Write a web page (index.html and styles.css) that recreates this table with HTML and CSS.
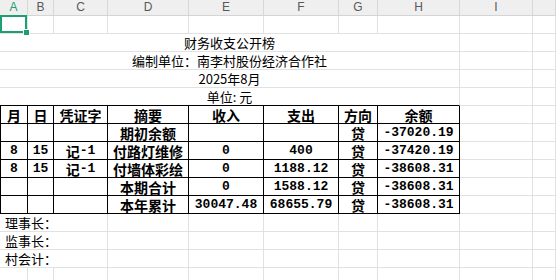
FILE: index.html
```html
<!DOCTYPE html>
<html lang="zh-CN">
<head>
<meta charset="utf-8">
<title>财务收支公开榜</title>
<link rel="stylesheet" href="styles.css">
</head>
<body>
<div class="sheet">
  <div class="cols">
    <div class="ch on">A</div><div class="ch">B</div><div class="ch">C</div><div class="ch">D</div><div class="ch">E</div><div class="ch">F</div><div class="ch">G</div><div class="ch">H</div><div class="ch">I</div><div class="ch"></div>
  </div>
  <div class="grid">
    <!-- row 1 -->
    <div class="c"></div><div class="c"></div><div class="c"></div><div class="c"></div><div class="c"></div><div class="c"></div><div class="c"></div><div class="c"></div><div class="c"></div><div class="c"></div>
    <!-- rows 2-5 -->
    <div class="c m8 title">财务收支公开榜</div><div class="c"></div><div class="c"></div>
    <div class="c m8 title">编制单位：南李村股份经济合作社</div><div class="c"></div><div class="c"></div>
    <div class="c m8 title">2025年8月</div><div class="c"></div><div class="c"></div>
    <div class="c m8 title topb">单位: 元</div><div class="c"></div><div class="c"></div>
    <!-- table header -->
    <div class="c t first cn">月</div><div class="c t cn">日</div><div class="c t cn">凭证字</div><div class="c t cn">摘要</div><div class="c t cn">收入</div><div class="c t cn">支出</div><div class="c t cn">方向</div><div class="c t cn">余额</div><div class="c"></div><div class="c"></div>
    <!-- row: 期初余额 -->
    <div class="c t first"></div><div class="c t"></div><div class="c t"></div><div class="c t cn">期初余额</div><div class="c t"></div><div class="c t"></div><div class="c t cn">贷</div><div class="c t num">-37020.19</div><div class="c"></div><div class="c"></div>
    <!-- row: 付路灯维修 -->
    <div class="c t first num">8</div><div class="c t num">15</div><div class="c t num"><span class="cn">记</span>-1</div><div class="c t cn">付路灯维修</div><div class="c t num">0</div><div class="c t num">400</div><div class="c t cn">贷</div><div class="c t num">-37420.19</div><div class="c"></div><div class="c"></div>
    <!-- row: 付墙体彩绘 -->
    <div class="c t first num">8</div><div class="c t num">15</div><div class="c t num"><span class="cn">记</span>-1</div><div class="c t cn">付墙体彩绘</div><div class="c t num">0</div><div class="c t num">1188.12</div><div class="c t cn">贷</div><div class="c t num">-38608.31</div><div class="c"></div><div class="c"></div>
    <!-- row: 本期合计 -->
    <div class="c t first"></div><div class="c t"></div><div class="c t"></div><div class="c t cn">本期合计</div><div class="c t num">0</div><div class="c t num">1588.12</div><div class="c t cn">贷</div><div class="c t num">-38608.31</div><div class="c"></div><div class="c"></div>
    <!-- row: 本年累计 -->
    <div class="c t first"></div><div class="c t"></div><div class="c t"></div><div class="c t cn">本年累计</div><div class="c t num">30047.48</div><div class="c t num">68655.79</div><div class="c t cn">贷</div><div class="c t num">-38608.31</div><div class="c"></div><div class="c"></div>
    <!-- footer rows -->
    <div class="c m3 title">理事长：</div><div class="c"></div><div class="c"></div><div class="c"></div><div class="c"></div><div class="c"></div><div class="c"></div><div class="c"></div>
    <div class="c m3 title">监事长：</div><div class="c"></div><div class="c"></div><div class="c"></div><div class="c"></div><div class="c"></div><div class="c"></div><div class="c"></div>
    <div class="c m3 title">村会计：</div><div class="c"></div><div class="c"></div><div class="c"></div><div class="c"></div><div class="c"></div><div class="c"></div><div class="c"></div>
    <!-- last partial row -->
    <div class="c"></div><div class="c"></div><div class="c"></div><div class="c"></div><div class="c"></div><div class="c"></div><div class="c"></div><div class="c"></div><div class="c"></div><div class="c"></div>
  </div>
  <div class="selection"><div class="handle"></div></div>
</div>
</body>
</html>
```

FILE: styles.css
```css
html, body {
  margin: 0;
  padding: 0;
  background: #ffffff;
}

.sheet {
  position: relative;
  width: 556px;
  height: 280px;
  overflow: hidden;
}

.cols,
.grid {
  display: grid;
  grid-template-columns: 28px 26px 54px 81px 75px 75px 39px 82px 73px 1fr;
}

.cols {
  height: 16px;
  background: #efefef;
}

.ch {
  box-sizing: border-box;
  border-right: 1px solid #d8d8d8;
  border-bottom: 1px solid #d4d4d4;
  font-family: "Liberation Sans", Arial, sans-serif;
  font-size: 12px;
  line-height: 15px;
  color: #595959;
  text-align: center;
}

.ch.on {
  color: #1ba073;
}

.grid {
  grid-auto-rows: 18px;
}

.c {
  box-sizing: border-box;
  border-right: 1px solid #e1e1e1;
  border-bottom: 1px solid #e1e1e1;
  display: flex;
  align-items: center;
  justify-content: center;
  white-space: nowrap;
  line-height: 16px;
  color: #000;
  overflow: hidden;
}

.c .cn {
  line-height: 16px;
}

.m8 {
  grid-column: span 8;
}

.m3 {
  grid-column: span 3;
  justify-content: flex-start;
  padding-left: 5px;
}

.title {
  font-family: "Noto Sans CJK SC", sans-serif;
  font-size: 13px;
}

.topb {
  border-bottom-color: #000;
}

.t {
  border-right-color: #000;
  border-bottom-color: #000;
}

.first {
  border-left: 1px solid #000;
}

.cn {
  font-family: "Noto Sans CJK SC", sans-serif;
  font-size: 14px;
  font-weight: bold;
}

.num {
  font-family: "Liberation Mono", "Noto Sans CJK SC", monospace;
  font-size: 13px;
  font-weight: bold;
}

.selection {
  position: absolute;
  left: 0;
  top: 15px;
  width: 27px;
  height: 18px;
  box-sizing: border-box;
  border: 2px solid #1ba073;
}

.handle {
  position: absolute;
  right: -5px;
  bottom: -5px;
  width: 5px;
  height: 5px;
  background: #1ba073;
  border: 1px solid #ffffff;
}
```
